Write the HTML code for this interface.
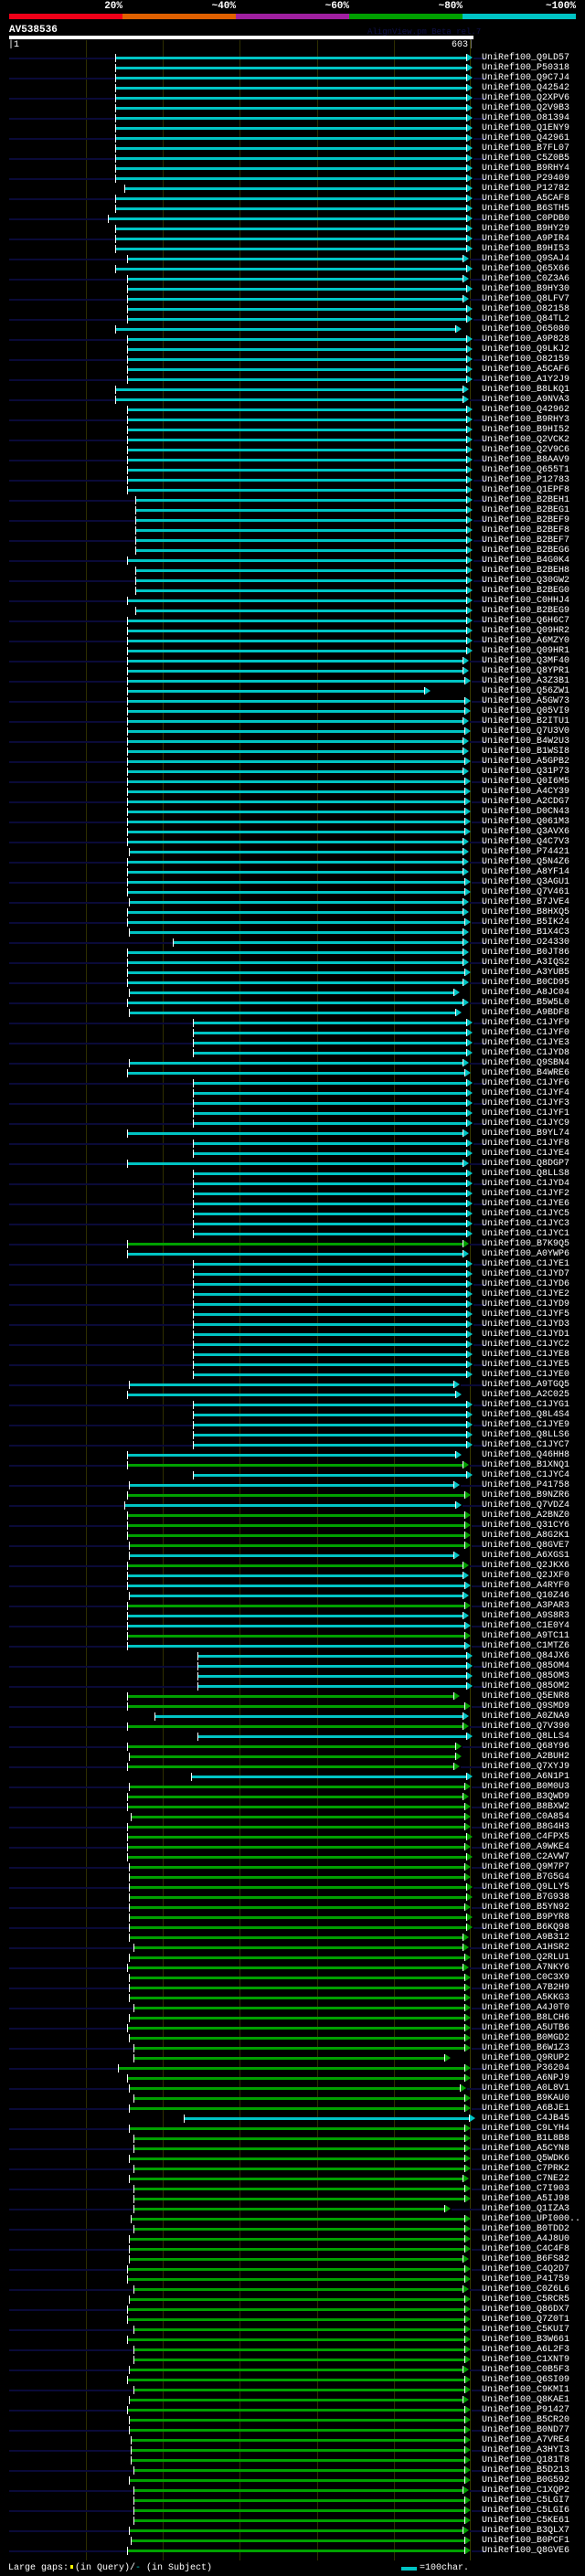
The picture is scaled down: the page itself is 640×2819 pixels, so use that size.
<!DOCTYPE html>
<html><head><meta charset="utf-8">
<style>
*{margin:0;padding:0;box-sizing:border-box}
body{width:640px;height:2819px;background:#000;position:relative;overflow:hidden;font-family:"Liberation Mono",monospace;color:#fff}
.abs{position:absolute}
.pct{position:absolute;top:1px;font-size:11px;font-weight:bold;line-height:12px;text-align:right}
.seg{position:absolute;top:15px;height:6px}
.gl{position:absolute;top:44px;height:2758px;width:1px;background:#2e2e00}
#rows{position:absolute;left:0;top:58px;width:640px}
.r{position:relative;height:11px;line-height:11px;padding-left:527px;font-size:10px;white-space:nowrap;
--c:#00c4c4;--s:139px;--e:510px;
background:linear-gradient(var(--c),var(--c)) no-repeat var(--s) 4px/calc(var(--e) - var(--s)) 3px}
.r.L{background:linear-gradient(var(--c),var(--c)) no-repeat var(--s) 4px/calc(var(--e) - var(--s)) 3px,
linear-gradient(#0a0a38,#0a0a38) no-repeat 10px 5px/calc(var(--s) - 10px) 2px,
linear-gradient(#0a0a38,#0a0a38) no-repeat calc(var(--e) + 6px) 5px/calc(526px - var(--e)) 2px}
.r::before{content:"";position:absolute;left:var(--s);top:1px;width:1px;height:9px;background:#fff}
.r::after{content:"";position:absolute;left:calc(var(--e) - 1px);top:1px;width:0;height:0;border-left:6px solid var(--c);border-top:4.5px solid transparent;border-bottom:4.5px solid transparent;box-shadow:-1px 0 0 #fff}
.g{--c:#00a000}
.a{--s:126px}.c{--s:148px}.d{--s:211px}.e{--s:216px}.f{--s:141px}.h{--s:146px}.k{--s:143px}
.x{--e:512px}.y{--e:508px}.z{--e:498px}.w{--e:500px}
</style></head><body>
<div class="pct" style="left:103px;width:31px">20%</div>
<div class="pct" style="left:222px;width:36px">~40%</div>
<div class="pct" style="left:346px;width:36px">~60%</div>
<div class="pct" style="left:470px;width:36px">~80%</div>
<div class="pct" style="left:590px;width:40px">~100%</div>
<div class="seg" style="left:10px;width:124px;background:#f00018"></div>
<div class="seg" style="left:134px;width:124px;background:#e06000"></div>
<div class="seg" style="left:258px;width:124px;background:#a020a0"></div>
<div class="seg" style="left:382px;width:124px;background:#00a000"></div>
<div class="seg" style="left:506px;width:124px;background:#00c4c4"></div>
<div class="abs" style="left:10px;top:27px;font-size:11px;font-weight:bold;line-height:12px">AV538536</div>
<div class="abs" style="left:402px;top:30px;font-size:9px;line-height:10px;color:#101048">AlignView.pm Beta rel.7</div>
<div class="abs" style="left:10px;top:39px;width:508px;height:4px;background:#fff"></div>
<div class="abs" style="left:9px;top:44px;font-size:10px;line-height:11px">|1</div>
<div class="abs" style="left:494px;top:44px;font-size:10px;line-height:11px">603|</div>
<div class="gl" style="left:94px"></div><div class="gl" style="left:178px"></div><div class="gl" style="left:262px"></div><div class="gl" style="left:347px"></div><div class="gl" style="left:431px"></div><div class="gl" style="left:514px;background:#3a3a00"></div>
<div id="rows">
<div class="r L a x">UniRef100_Q9LD57</div>
<div class="r a x">UniRef100_P50318</div>
<div class="r L a x">UniRef100_Q9C7J4</div>
<div class="r a x">UniRef100_Q42542</div>
<div class="r L a x">UniRef100_Q2XPV6</div>
<div class="r a x">UniRef100_Q2V9B3</div>
<div class="r L a x">UniRef100_O81394</div>
<div class="r a x">UniRef100_Q1ENY9</div>
<div class="r L a x">UniRef100_Q42961</div>
<div class="r a x">UniRef100_B7FL07</div>
<div class="r L a x">UniRef100_C5Z0B5</div>
<div class="r a x">UniRef100_B9RHY4</div>
<div class="r L a x">UniRef100_P29409</div>
<div class="r x" style="--s:136px">UniRef100_P12782</div>
<div class="r L a x">UniRef100_A5CAF8</div>
<div class="r a x">UniRef100_B6STH5</div>
<div class="r L x" style="--s:118px">UniRef100_C0PDB0</div>
<div class="r a x">UniRef100_B9HY29</div>
<div class="r L a x">UniRef100_A9PIR4</div>
<div class="r a x">UniRef100_B9HI53</div>
<div class="r L y">UniRef100_Q9SAJ4</div>
<div class="r a x">UniRef100_Q65X66</div>
<div class="r L y">UniRef100_C0Z3A6</div>
<div class="r x">UniRef100_B9HY30</div>
<div class="r L y">UniRef100_Q8LFV7</div>
<div class="r x">UniRef100_O82158</div>
<div class="r L x">UniRef100_Q84TL2</div>
<div class="r a w">UniRef100_O65080</div>
<div class="r L x">UniRef100_A9P828</div>
<div class="r x">UniRef100_Q9LKJ2</div>
<div class="r L x">UniRef100_O82159</div>
<div class="r x">UniRef100_A5CAF6</div>
<div class="r L x">UniRef100_A1Y2J9</div>
<div class="r a y">UniRef100_B8LKQ1</div>
<div class="r L a y">UniRef100_A9NVA3</div>
<div class="r x">UniRef100_Q42962</div>
<div class="r L x">UniRef100_B9RHY3</div>
<div class="r x">UniRef100_B9HI52</div>
<div class="r L x">UniRef100_Q2VCK2</div>
<div class="r x">UniRef100_Q2V9C6</div>
<div class="r L x">UniRef100_B8AAV9</div>
<div class="r x">UniRef100_Q655T1</div>
<div class="r L x">UniRef100_P12783</div>
<div class="r x">UniRef100_Q1EPF8</div>
<div class="r L c x">UniRef100_B2BEH1</div>
<div class="r c x">UniRef100_B2BEG1</div>
<div class="r L c x">UniRef100_B2BEF9</div>
<div class="r c x">UniRef100_B2BEF8</div>
<div class="r L c x">UniRef100_B2BEF7</div>
<div class="r c x">UniRef100_B2BEG6</div>
<div class="r L x">UniRef100_B4G0K4</div>
<div class="r c x">UniRef100_B2BEH8</div>
<div class="r L c x">UniRef100_Q30GW2</div>
<div class="r c x">UniRef100_B2BEG0</div>
<div class="r L x">UniRef100_C0HHJ4</div>
<div class="r c x">UniRef100_B2BEG9</div>
<div class="r L x">UniRef100_Q6H6C7</div>
<div class="r x">UniRef100_Q09HR2</div>
<div class="r L x">UniRef100_A6MZY0</div>
<div class="r x">UniRef100_Q09HR1</div>
<div class="r L y">UniRef100_Q3MF40</div>
<div class="r y">UniRef100_Q8YPR1</div>
<div class="r L">UniRef100_A3Z3B1</div>
<div class="r" style="--e:466px">UniRef100_Q56ZW1</div>
<div class="r L">UniRef100_A5GW73</div>
<div class="r">UniRef100_Q05VI9</div>
<div class="r L y">UniRef100_B2ITU1</div>
<div class="r">UniRef100_Q7U3V0</div>
<div class="r L y">UniRef100_B4W2U3</div>
<div class="r y">UniRef100_B1WSI8</div>
<div class="r L">UniRef100_A5GPB2</div>
<div class="r y">UniRef100_Q31P73</div>
<div class="r L">UniRef100_Q0I6M5</div>
<div class="r">UniRef100_A4CY39</div>
<div class="r L">UniRef100_A2CDG7</div>
<div class="r">UniRef100_D0CN43</div>
<div class="r L">UniRef100_Q061M3</div>
<div class="r">UniRef100_Q3AVX6</div>
<div class="r L y">UniRef100_Q4C7V3</div>
<div class="r f y">UniRef100_P74421</div>
<div class="r L y">UniRef100_Q5N4Z6</div>
<div class="r y">UniRef100_A8YF14</div>
<div class="r L">UniRef100_Q3AGU1</div>
<div class="r">UniRef100_Q7V461</div>
<div class="r L f y">UniRef100_B7JVE4</div>
<div class="r y">UniRef100_B8HXQ5</div>
<div class="r L">UniRef100_B5IK24</div>
<div class="r f y">UniRef100_B1X4C3</div>
<div class="r L y" style="--s:189px">UniRef100_O24330</div>
<div class="r y">UniRef100_B0JT86</div>
<div class="r L y">UniRef100_A3IQS2</div>
<div class="r">UniRef100_A3YUB5</div>
<div class="r L y">UniRef100_B0CD95</div>
<div class="r f z">UniRef100_A8JC04</div>
<div class="r L y">UniRef100_B5W5L0</div>
<div class="r f w">UniRef100_A9BDF8</div>
<div class="r L d x">UniRef100_C1JYF9</div>
<div class="r d x">UniRef100_C1JYF0</div>
<div class="r L d x">UniRef100_C1JYE3</div>
<div class="r d x">UniRef100_C1JYD8</div>
<div class="r L f y">UniRef100_Q9SBN4</div>
<div class="r">UniRef100_B4WRE6</div>
<div class="r L d x">UniRef100_C1JYF6</div>
<div class="r d x">UniRef100_C1JYF4</div>
<div class="r L d x">UniRef100_C1JYF3</div>
<div class="r d x">UniRef100_C1JYF1</div>
<div class="r L d x">UniRef100_C1JYC9</div>
<div class="r y">UniRef100_B9YL74</div>
<div class="r L d x">UniRef100_C1JYF8</div>
<div class="r d x">UniRef100_C1JYE4</div>
<div class="r L y">UniRef100_Q8DGP7</div>
<div class="r d x">UniRef100_Q8LLS8</div>
<div class="r L d x">UniRef100_C1JYD4</div>
<div class="r d x">UniRef100_C1JYF2</div>
<div class="r L d x">UniRef100_C1JYE6</div>
<div class="r d x">UniRef100_C1JYC5</div>
<div class="r L d x">UniRef100_C1JYC3</div>
<div class="r d x">UniRef100_C1JYC1</div>
<div class="r L g y">UniRef100_B7K9Q5</div>
<div class="r y">UniRef100_A0YWP6</div>
<div class="r L d x">UniRef100_C1JYE1</div>
<div class="r d x">UniRef100_C1JYD7</div>
<div class="r L d x">UniRef100_C1JYD6</div>
<div class="r d x">UniRef100_C1JYE2</div>
<div class="r L d x">UniRef100_C1JYD9</div>
<div class="r d x">UniRef100_C1JYF5</div>
<div class="r L d x">UniRef100_C1JYD3</div>
<div class="r d x">UniRef100_C1JYD1</div>
<div class="r L d x">UniRef100_C1JYC2</div>
<div class="r d x">UniRef100_C1JYE8</div>
<div class="r L d x">UniRef100_C1JYE5</div>
<div class="r d x">UniRef100_C1JYE0</div>
<div class="r L f z">UniRef100_A9TGQ5</div>
<div class="r w">UniRef100_A2C025</div>
<div class="r L d x">UniRef100_C1JYG1</div>
<div class="r d x">UniRef100_Q8L4S4</div>
<div class="r L d x">UniRef100_C1JYE9</div>
<div class="r d x">UniRef100_Q8LLS6</div>
<div class="r L d x">UniRef100_C1JYC7</div>
<div class="r w">UniRef100_Q46HH8</div>
<div class="r L g y">UniRef100_B1XNQ1</div>
<div class="r d x">UniRef100_C1JYC4</div>
<div class="r L f z">UniRef100_P41758</div>
<div class="r g">UniRef100_B9NZR6</div>
<div class="r L w" style="--s:136px">UniRef100_Q7VDZ4</div>
<div class="r g">UniRef100_A2BNZ0</div>
<div class="r L g">UniRef100_Q31CY6</div>
<div class="r g">UniRef100_A8G2K1</div>
<div class="r L g f">UniRef100_Q8GVE7</div>
<div class="r f z">UniRef100_A6XGS1</div>
<div class="r L g y">UniRef100_Q2JKX6</div>
<div class="r y">UniRef100_Q2JXF0</div>
<div class="r L">UniRef100_A4RYF0</div>
<div class="r f y">UniRef100_Q10Z46</div>
<div class="r L g">UniRef100_A3PAR3</div>
<div class="r y">UniRef100_A9S8R3</div>
<div class="r L">UniRef100_C1E0Y4</div>
<div class="r g">UniRef100_A9TC11</div>
<div class="r L">UniRef100_C1MTZ6</div>
<div class="r e x">UniRef100_Q84JX6</div>
<div class="r L e x">UniRef100_Q85OM4</div>
<div class="r e x">UniRef100_Q85OM3</div>
<div class="r L e x">UniRef100_Q85OM2</div>
<div class="r g z">UniRef100_Q5ENR8</div>
<div class="r L g">UniRef100_Q9SMD9</div>
<div class="r y" style="--s:169px">UniRef100_A0ZNA9</div>
<div class="r L g y">UniRef100_Q7V390</div>
<div class="r e x">UniRef100_Q8LLS4</div>
<div class="r L g w">UniRef100_Q68Y96</div>
<div class="r g f w">UniRef100_A2BUH2</div>
<div class="r L g z">UniRef100_Q7XYJ9</div>
<div class="r x" style="--s:209px">UniRef100_A6N1P1</div>
<div class="r L g f">UniRef100_B0M0U3</div>
<div class="r g y">UniRef100_B3QWD9</div>
<div class="r L g">UniRef100_B8BXW2</div>
<div class="r g k">UniRef100_C0A854</div>
<div class="r L g">UniRef100_B8G4H3</div>
<div class="r g x">UniRef100_C4FPX5</div>
<div class="r L g">UniRef100_A9WKE4</div>
<div class="r g x">UniRef100_C2AVW7</div>
<div class="r L g f">UniRef100_Q9M7P7</div>
<div class="r g f">UniRef100_B7G5G4</div>
<div class="r L g f x">UniRef100_Q9LLY5</div>
<div class="r g f x">UniRef100_B7G938</div>
<div class="r L g f">UniRef100_B5YN92</div>
<div class="r g f x">UniRef100_B9PYR8</div>
<div class="r L g f x">UniRef100_B6KQ98</div>
<div class="r g f y">UniRef100_A9B312</div>
<div class="r L g h y">UniRef100_A1HSR2</div>
<div class="r g f">UniRef100_Q2RLU1</div>
<div class="r L g y">UniRef100_A7NKY6</div>
<div class="r g f">UniRef100_C0C3X9</div>
<div class="r L g f">UniRef100_A7B2H9</div>
<div class="r g f">UniRef100_A5KKG3</div>
<div class="r L g h">UniRef100_A4J0T0</div>
<div class="r g f">UniRef100_B8LCH6</div>
<div class="r L g">UniRef100_A5UTB6</div>
<div class="r g f">UniRef100_B0MGD2</div>
<div class="r L g h">UniRef100_B6W1Z3</div>
<div class="r g h" style="--e:488px">UniRef100_Q9RUP2</div>
<div class="r L g" style="--s:129px">UniRef100_P36204</div>
<div class="r g">UniRef100_A6NPJ9</div>
<div class="r L g f" style="--e:505px">UniRef100_A0L8V1</div>
<div class="r g h">UniRef100_B9KAU0</div>
<div class="r L g f">UniRef100_A6BJE1</div>
<div class="r" style="--s:201px;--e:515px">UniRef100_C4JB45</div>
<div class="r L g f">UniRef100_C9LYH4</div>
<div class="r g h">UniRef100_B1L8B8</div>
<div class="r L g h">UniRef100_A5CYN8</div>
<div class="r g f">UniRef100_Q5WDK6</div>
<div class="r L g h">UniRef100_C7PRK2</div>
<div class="r g f y">UniRef100_C7NE22</div>
<div class="r L g h">UniRef100_C7I903</div>
<div class="r g h">UniRef100_A5IJ98</div>
<div class="r L g h" style="--e:488px">UniRef100_Q1IZA3</div>
<div class="r g k">UniRef100_UPI000..</div>
<div class="r L g h">UniRef100_B0TDD2</div>
<div class="r g f">UniRef100_A4J8U0</div>
<div class="r L g f">UniRef100_C4C4F8</div>
<div class="r g f y">UniRef100_B6FS82</div>
<div class="r L g">UniRef100_C4Q2D7</div>
<div class="r g">UniRef100_P41759</div>
<div class="r L g h y">UniRef100_C0Z6L6</div>
<div class="r g f">UniRef100_C5RCR5</div>
<div class="r L g">UniRef100_Q86DX7</div>
<div class="r g">UniRef100_Q7Z0T1</div>
<div class="r L g h">UniRef100_C5KUI7</div>
<div class="r g">UniRef100_B3W661</div>
<div class="r L g h">UniRef100_A6L2F3</div>
<div class="r g h">UniRef100_C1XNT9</div>
<div class="r L g f y">UniRef100_C0B5F3</div>
<div class="r g">UniRef100_Q6SI09</div>
<div class="r L g h">UniRef100_C9KMI1</div>
<div class="r g f y">UniRef100_Q8KAE1</div>
<div class="r L g">UniRef100_P91427</div>
<div class="r g f">UniRef100_B5CR20</div>
<div class="r L g f">UniRef100_B0ND77</div>
<div class="r g k">UniRef100_A7VRE4</div>
<div class="r L g k">UniRef100_A3HYI3</div>
<div class="r g k">UniRef100_Q181T8</div>
<div class="r L g h">UniRef100_B5D213</div>
<div class="r g f">UniRef100_B0G592</div>
<div class="r L g h y">UniRef100_C1XQP2</div>
<div class="r g h">UniRef100_C5LGI7</div>
<div class="r L g h">UniRef100_C5LGI6</div>
<div class="r g h">UniRef100_C5KE61</div>
<div class="r L g f y">UniRef100_B3QLX7</div>
<div class="r g k">UniRef100_B0PCF1</div>
<div class="r L g">UniRef100_Q8GVE6</div>
</div>
<div class="abs" style="left:9px;top:2805px;font-size:10px;line-height:12px;white-space:nowrap">Large gaps:<span style="display:inline-block;width:3px;height:4px;background:#ff0;margin:0 2px 1px 2px"></span>(in Query)/<span style="color:#00c4c4">-</span> (in Subject)</div>
<div class="abs" style="left:439px;top:2809px;width:17px;height:4px;background:#00c4c4"></div>
<div class="abs" style="left:459px;top:2805px;font-size:10px;line-height:12px">=100char.</div>
</body></html>
